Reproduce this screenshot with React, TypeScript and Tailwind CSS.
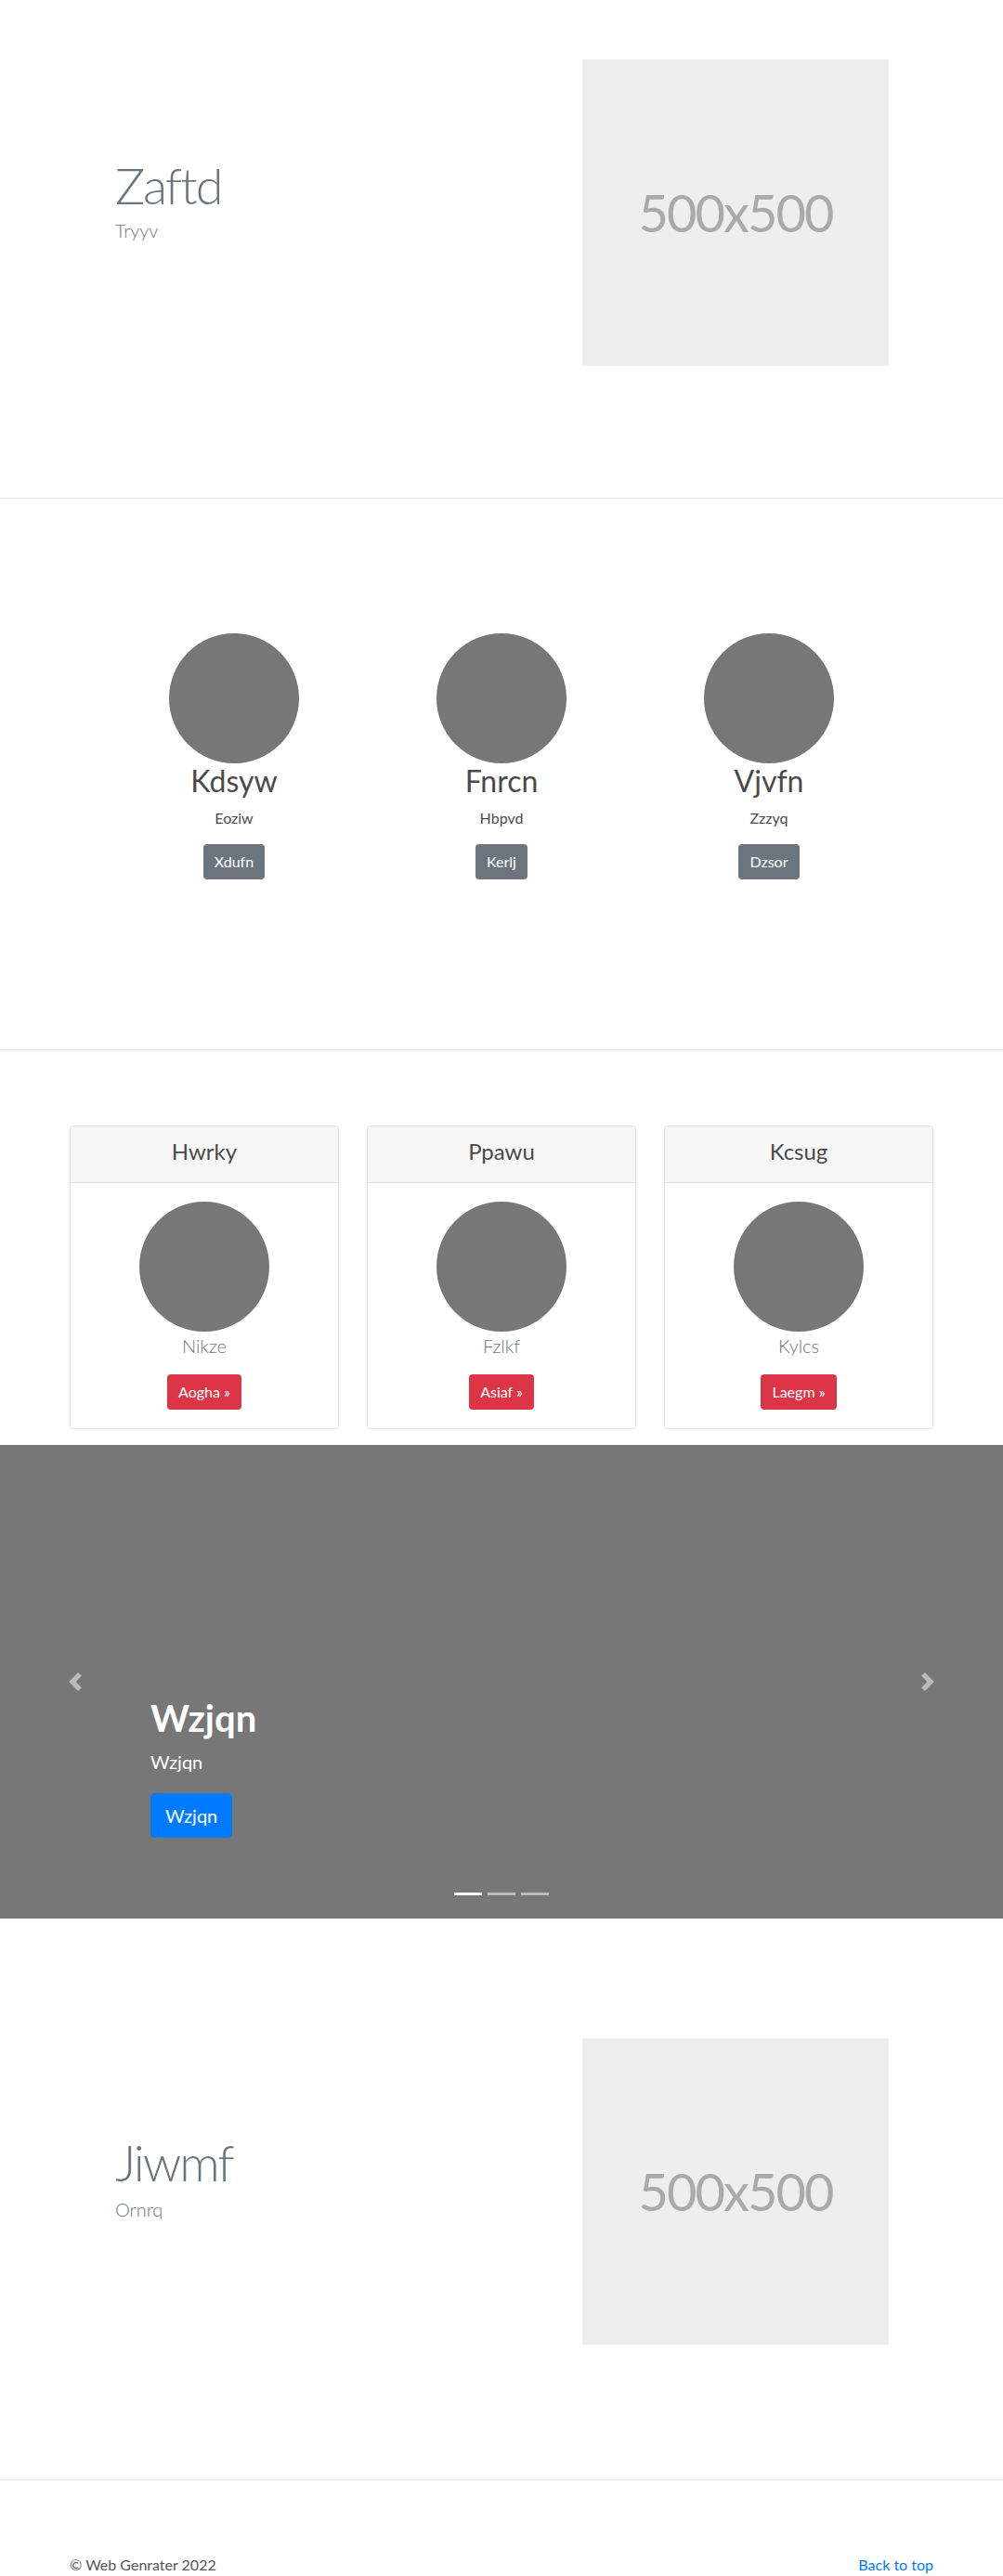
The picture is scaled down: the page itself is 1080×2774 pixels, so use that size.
import React from "react";

function Placeholder() {
  return (
    <div className="flex h-[330px] w-[330px] items-center justify-center bg-[#eeeeee] text-[56px] leading-none tracking-[-2px] text-[#aaaaaa]">
      500x500
    </div>
  );
}

const team = [
  { name: "Kdsyw", sub: "Eoziw", btn: "Xdufn" },
  { name: "Fnrcn", sub: "Hbpvd", btn: "Kerlj" },
  { name: "Vjvfn", sub: "Zzzyq", btn: "Dzsor" },
];

const cards = [
  { title: "Hwrky", sub: "Nikze", btn: "Aogha »" },
  { title: "Ppawu", sub: "Fzlkf", btn: "Asiaf »" },
  { title: "Kcsug", sub: "Kylcs", btn: "Laegm »" },
];

export default function App() {
  return (
    <div className="w-[1080px] overflow-hidden bg-white font-['Lato',sans-serif] text-[#212529]">
      {/* Hero 1 */}
      <section className="h-[537px] border-b border-[#e3e3e3]">
        <div className="mx-auto flex w-[930px]">
          <div className="w-[465px] pl-[49px] pt-[168px]">
            <h1 className="text-[54px] font-light leading-[1.2] tracking-[-2px] text-[#6c757d]">Zaftd</h1>
            <p className="text-[20px] font-light leading-[1.5] text-[#6c757d]">Tryyv</p>
          </div>
          <div className="flex flex-1 justify-end pr-[48px] pt-[64px]">
            <Placeholder />
          </div>
        </div>
      </section>

      {/* Team */}
      <section className="h-[594px] border-b border-[#e3e3e3] pt-[145px]">
        <div className="flex justify-center">
          {team.map((t) => (
            <div key={t.name} className="flex w-[288px] flex-col items-center">
              <div className="h-[140px] w-[140px] rounded-full bg-[#777777]" />
              <h2 className="text-[32px] font-normal leading-[1.2] text-[#4a4a4a]">{t.name}</h2>
              <p className="mt-[9px] text-[16px] leading-[1.5] text-[#4a4a4a]">{t.sub}</p>
              <button className="mt-[16px] h-[38px] rounded-[4px] bg-[#6c757d] px-[12px] text-[16px] leading-[1.5] text-white">
                {t.btn}
              </button>
            </div>
          ))}
        </div>
      </section>

      {/* Cards */}
      <section className="pb-[17px] pt-[81px]">
        <div className="mx-auto grid w-[930px] grid-cols-3 gap-[30px]">
          {cards.map((c) => (
            <div key={c.title} className="overflow-hidden rounded-[4px] border border-[#dfdfdf]">
              <div className="h-[61px] border-b border-[#dfdfdf] bg-[#f7f7f7] pt-[13px] text-center">
                <h4 className="text-[24px] font-normal leading-[1.2] text-[#4a4a4a]">{c.title}</h4>
              </div>
              <div className="flex flex-col items-center p-[20px]">
                <div className="h-[140px] w-[140px] rounded-full bg-[#777777]" />
                <p className="text-[20px] font-light leading-[1.5] text-[#6c757d]">{c.sub}</p>
                <button className="mt-[16px] h-[38px] rounded-[4px] bg-[#dc3545] px-[12px] text-[16px] leading-[1.5] text-white">
                  {c.btn}
                </button>
              </div>
            </div>
          ))}
        </div>
      </section>

      {/* Carousel */}
      <section className="relative h-[510px] bg-[#777777]">
        <div className="pl-[162px] pt-[270px]">
          <h1 className="text-[40px] font-bold leading-[1.2] text-white">Wzjqn</h1>
          <p className="mt-[8px] text-[20px] leading-[1.5] text-white">Wzjqn</p>
          <button className="mt-[19px] h-[48px] rounded-[5px] bg-[#007bff] px-[16px] text-[20px] leading-[1.5] text-white">
            Wzjqn
          </button>
        </div>
        <div className="absolute bottom-0 left-0 top-0 flex w-[15%] items-center justify-center">
          <svg width="20" height="20" viewBox="0 0 8 8" fill="#ffffff" opacity="0.5">
            <path d="M5.25 0l-4 4 4 4 1.5-1.5L4.25 4l2.5-2.5L5.25 0z" />
          </svg>
        </div>
        <div className="absolute bottom-0 right-0 top-0 flex w-[15%] items-center justify-center">
          <svg width="20" height="20" viewBox="0 0 8 8" fill="#ffffff" opacity="0.5">
            <path d="M2.75 0l-1.5 1.5L3.75 4l-2.5 2.5L2.75 8l4-4-4-4z" />
          </svg>
        </div>
        <div className="absolute bottom-[25px] left-0 right-0 flex justify-center gap-[6px]">
          <span className="block h-[3px] w-[30px] bg-white" />
          <span className="block h-[3px] w-[30px] bg-white/50" />
          <span className="block h-[3px] w-[30px] bg-white/50" />
        </div>
      </section>

      {/* Hero 2 */}
      <section className="h-[605px] border-b border-[#e3e3e3]">
        <div className="mx-auto flex w-[930px]">
          <div className="w-[465px] pl-[49px] pt-[231px]">
            <h1 className="text-[54px] font-light leading-[1.2] tracking-[-2px] text-[#6c757d]">Jiwmf</h1>
            <p className="mt-[2px] text-[20px] font-light leading-[1.5] text-[#6c757d]">Ornrq</p>
          </div>
          <div className="flex flex-1 justify-end pr-[48px] pt-[129px]">
            <Placeholder />
          </div>
        </div>
      </section>

      {/* Footer */}
      <footer className="pt-[79px]">
        <div className="mx-auto flex w-[930px] justify-between text-[16px] leading-[24px]">
          <p className="text-[#555555]">© Web Genrater 2022</p>
          <a href="#" className="text-[#007bff]">Back to top</a>
        </div>
      </footer>
    </div>
  );
}
